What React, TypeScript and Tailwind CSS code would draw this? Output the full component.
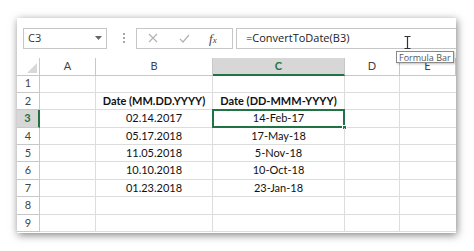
import React from 'react';

const cols = ['A', 'B', 'C', 'D', 'E'];

const rows: [string, string][] = [
    ['', ''],
    ['Date (MM.DD.YYYY)', 'Date (DD-MMM-YYYY)'],
    ['02.14.2017', '14-Feb-17'],
    ['05.17.2018', '17-May-18'],
    ['11.05.2018', '5-Nov-18'],
    ['10.10.2018', '10-Oct-18'],
    ['01.23.2018', '23-Jan-18'],
    ['', ''],
    ['', ''],
];

const cellFont = { fontFamily: 'Lato, "Noto Sans", sans-serif' };
const uiFont = { fontFamily: '"Open Sans", "Noto Sans", sans-serif' };

const FormulaBar: React.FC = () => (
    <div className="flex h-[40px] items-center pl-[6px]" style={uiFont}>
        <div className="flex h-[21px] w-[84px] items-center justify-between border border-[#c6c6c6] pl-[4px] pr-[4px] text-[11px] text-[#333]">
            <span>C3</span>
            <svg width="7" height="4" viewBox="0 0 7 4">
                <path d="M0 0 L7 0 L3.5 4 Z" fill="#666" />
            </svg>
        </div>
        <div className="ml-[15px] flex w-[4px] flex-col items-center gap-[2px]">
            <span className="h-[2px] w-[2px] bg-[#a6a6a6]" />
            <span className="h-[2px] w-[2px] bg-[#a6a6a6]" />
            <span className="h-[2px] w-[2px] bg-[#a6a6a6]" />
        </div>
        <div className="ml-[10px] flex h-[21px] w-[97px] items-center border border-[#c6c6c6]">
            <svg className="ml-[11px]" width="10" height="10" viewBox="0 0 10 10">
                <path d="M1 1 L9 9 M9 1 L1 9" stroke="#b3b3b3" strokeWidth="1.2" />
            </svg>
            <svg className="ml-[21px]" width="11" height="9" viewBox="0 0 11 9">
                <path d="M1 5 L4 8 L10 1" stroke="#b3b3b3" strokeWidth="1.2" fill="none" />
            </svg>
            <span
                className="ml-[19px] text-[13px] italic leading-none text-[#444]"
                style={{ fontFamily: '"Liberation Serif", serif' }}
            >
                f<span className="text-[9px]">x</span>
            </span>
        </div>
        <div className="ml-[3px] flex h-[21px] flex-1 items-center border border-r-0 border-[#c6c6c6] pl-[9px] text-[11px] text-[#222]">
            =ConvertToDate(B3)
        </div>
    </div>
);

const Sheet: React.FC = () => (
    <div
        className="grid grid-cols-[23px_56px_117px_132px_55px_1fr] grid-rows-[17.5px_repeat(9,17.4px)] text-[11px]"
        style={cellFont}
    >
        <div className="relative border-r border-b border-[#c8c8c8] bg-white">
            <svg className="absolute right-[2px] bottom-[2px]" width="10" height="10" viewBox="0 0 10 10">
                <path d="M10 0 L10 10 L0 10 Z" fill="#d8d8d8" />
            </svg>
        </div>
        {cols.map((c) =>
            c === 'C' ? (
                <div
                    key={c}
                    className="flex items-center justify-center border-r border-b-2 border-r-[#c8c8c8] border-b-[#217346] bg-[#d7d7d7] font-bold text-[#217346]"
                >
                    {c}
                </div>
            ) : (
                <div
                    key={c}
                    className="flex items-center justify-center border-r border-b border-[#c8c8c8] text-[#444]"
                >
                    {c}
                </div>
            )
        )}
        {rows.map(([b, c], i) => {
            const n = i + 1;
            const selected = n === 3;
            const bold = n === 2;
            return (
                <React.Fragment key={n}>
                    <div
                        className={
                            selected
                                ? 'flex items-center justify-center border-r-2 border-b border-r-[#217346] border-b-[#c8c8c8] bg-[#d7d7d7] font-bold text-[#217346]'
                                : 'flex items-center justify-center border-r border-b border-[#c8c8c8] text-[#444]'
                        }
                    >
                        {n}
                    </div>
                    <div className="border-r border-b border-[#dcdcdc]" />
                    <div
                        className={`flex items-center justify-center border-r border-b border-[#dcdcdc] text-[#111] ${bold ? 'font-bold' : ''}`}
                    >
                        {b}
                    </div>
                    <div
                        className={`relative flex items-center justify-center border-r border-b border-[#dcdcdc] text-[#111] ${bold ? 'font-bold' : ''}`}
                    >
                        {c}
                        {selected && (
                            <>
                                <div className="absolute -top-[1px] -left-[1px] -right-[1px] -bottom-[1px] border-2 border-[#217346]" />
                                <div className="absolute -right-[3px] -bottom-[3px] h-[5px] w-[5px] border border-white bg-[#217346]" />
                            </>
                        )}
                    </div>
                    <div className="border-r border-b border-[#dcdcdc]" />
                    <div className="border-b border-[#dcdcdc]" />
                </React.Fragment>
            );
        })}
    </div>
);

export default function App() {
    return (
        <div className="h-[251px] w-[474px] overflow-hidden bg-white pt-[18px] pl-[17px]">
            <div className="relative h-[215px] w-[439px] overflow-hidden bg-white shadow-[1px_2px_8px_rgba(0,0,0,0.5)]">
                <FormulaBar />
                <Sheet />
                <svg className="absolute top-[18px] left-[387px]" width="7" height="13" viewBox="0 0 7 13">
                    <path d="M0.5 0.5 L6.5 0.5 M3.5 0.5 L3.5 12.5 M0.5 12.5 L6.5 12.5" stroke="#333" strokeWidth="1.2" fill="none" />
                </svg>
                <div
                    className="absolute top-[33px] left-[379px] flex h-[12px] w-[58px] items-center border border-[#8a8a8a] bg-white pl-[2px] text-[9px] leading-none text-[#555] shadow-[1px_1px_2px_rgba(0,0,0,0.25)]"
                    style={uiFont}
                >
                    Formula Bar
                </div>
            </div>
        </div>
    );
}
